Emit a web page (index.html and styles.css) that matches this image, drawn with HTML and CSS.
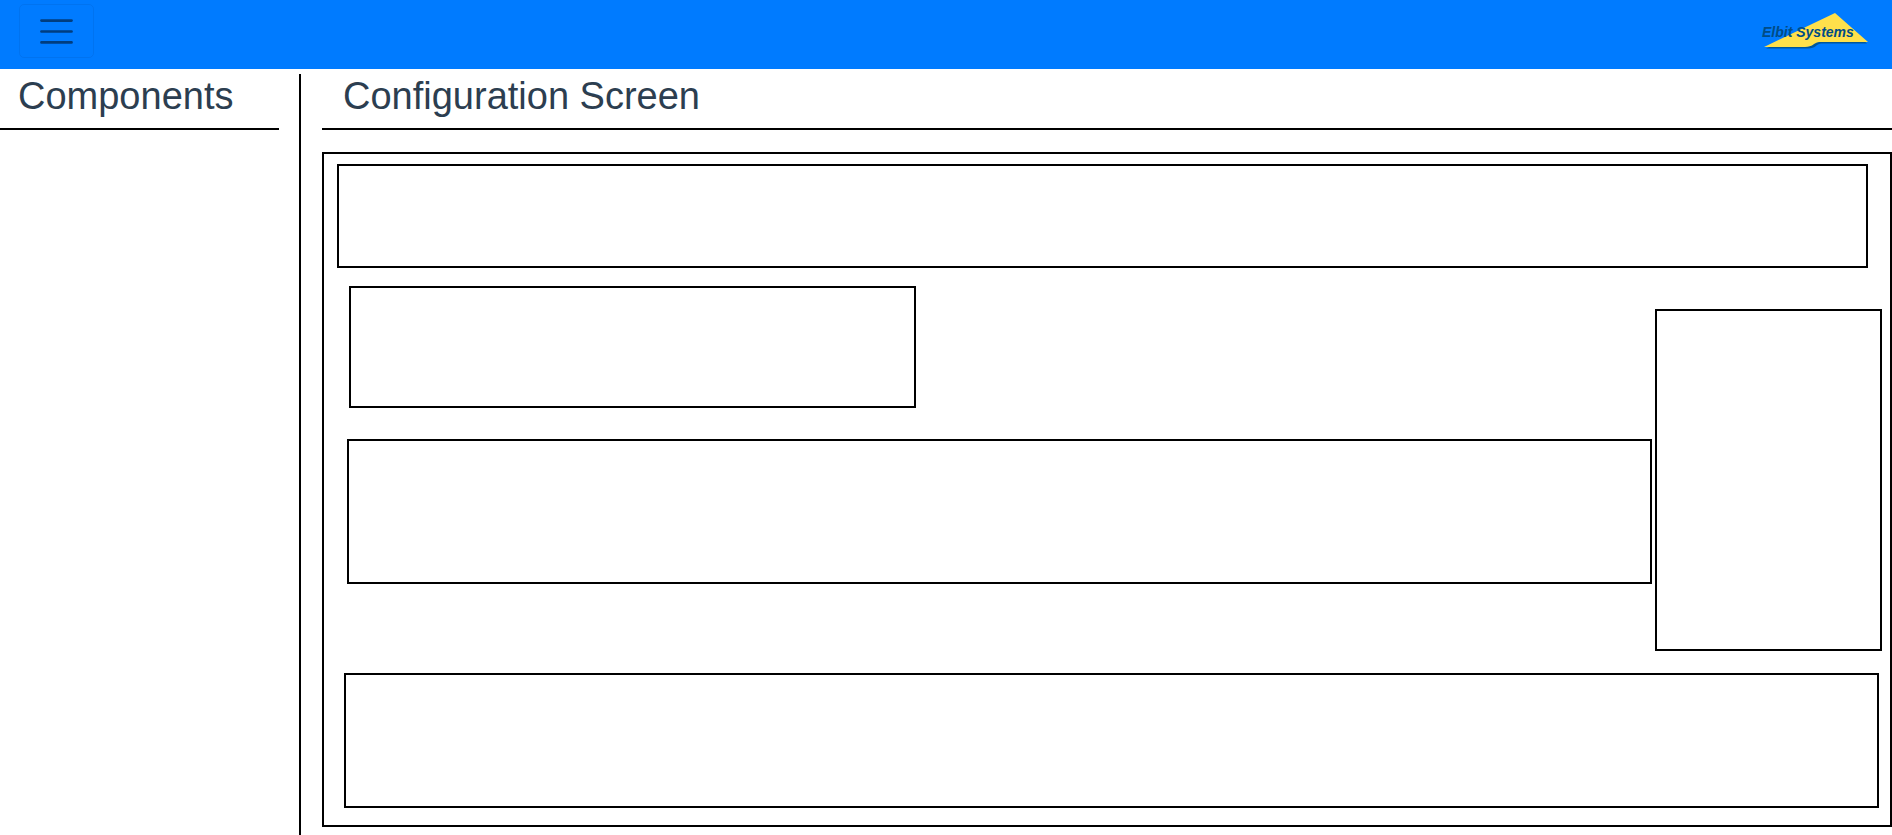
FILE: index.html
```html
<!DOCTYPE html>
<html lang="en">
<head>
<meta charset="utf-8">
<title>Configuration Screen</title>
<link rel="stylesheet" href="styles.css">
</head>
<body>
<header class="navbar">
  <button class="navbar-toggler" type="button" aria-label="Toggle navigation">
    <svg class="toggler-icon" viewBox="0 0 30 30" aria-hidden="true"><path d="M4 7h22M4 15h22M4 23h22"/></svg>
  </button>
  <a class="brand" href="#" aria-label="Elbit Systems">
    <svg class="logo" viewBox="0 0 112 40" aria-hidden="true">
      <path class="logo-shadow" d="M8 39.5 L77 7 L109 34.5 L63 34.5 C57 35.5 58 39.5 50 39.5 Z"/>
      <path class="logo-shape" d="M6 38 L77 4 L110 33 L61 33 C55 34 55 38 47 38 Z"/>
      <text class="logo-text" x="4" y="28">Elbit Systems</text>
    </svg>
  </a>
</header>
<div class="layout">
  <aside class="sidebar">
    <h1 class="title">Components</h1>
  </aside>
  <main class="content">
    <h1 class="title">Configuration Screen</h1>
    <div class="screen">
      <section class="box box-top"></section>
      <div class="middle">
        <div class="column">
          <section class="box box-small"></section>
          <section class="box box-wide"></section>
        </div>
        <section class="box box-side"></section>
      </div>
      <section class="box box-bottom"></section>
    </div>
  </main>
</div>
</body>
</html>
```
FILE: styles.css
```css
* { box-sizing: border-box; }
body {
  margin: 0;
  min-height: 100vh;
  display: flex;
  flex-direction: column;
  background: #fff;
  color: #2c3e50;
  font-family: "Liberation Sans", Arial, sans-serif;
}
.navbar {
  display: flex;
  justify-content: space-between;
  align-items: flex-start;
  height: 69px;
  padding: 4px 22px 0 19px;
  background: #007bff;
}
.navbar-toggler {
  display: flex;
  align-items: center;
  justify-content: center;
  width: 75px;
  height: 54px;
  padding: 0;
  border: 1px solid rgba(0, 0, 0, 0.06);
  border-radius: 5px;
  background: transparent;
}
.toggler-icon {
  width: 45px;
  height: 41px;
  fill: none;
  stroke: rgba(0, 0, 0, 0.5);
  stroke-width: 2;
  stroke-linecap: round;
}
.brand { margin-top: 5px; }
.logo {
  display: block;
  width: 112px;
  height: 40px;
  overflow: visible;
}
.logo-shape { fill: #ffe04b; }
.logo-shadow { fill: #00569c; }
.logo-text {
  fill: #004c86;
  font: italic 700 14px "Liberation Sans", Arial, sans-serif;
}
.layout {
  flex: 1;
  display: flex;
  padding-top: 5px;
}
.sidebar {
  width: 301px;
  flex-shrink: 0;
  padding-right: 20px;
  border-right: 2px solid #000;
}
.content {
  flex: 1;
  min-width: 0;
  padding: 0 0 8px 21px;
}
.title {
  margin: 0;
  padding: 0 18px 10px;
  border-bottom: 2px solid #000;
  font-size: 38px;
  font-weight: 400;
  line-height: 44px;
}
.content .title { padding-left: 21px; }
.screen {
  margin-top: 22px;
  padding: 10px 8px 17px 13px;
  border: 2px solid #000;
}
.box { border: 2px solid #000; }
.box-top {
  height: 104px;
  margin-right: 14px;
}
.middle {
  display: flex;
  align-items: flex-start;
  gap: 3px;
  margin-top: 18px;
  padding-left: 10px;
}
.column {
  flex: 1;
  min-width: 0;
}
.box-small {
  width: 567px;
  max-width: 100%;
  height: 122px;
  margin-left: 2px;
}
.box-wide {
  height: 145px;
  margin-top: 31px;
}
.box-side {
  width: 227px;
  height: 342px;
  margin-top: 23px;
}
.box-bottom {
  height: 135px;
  margin: 22px 3px 0 7px;
}
```
